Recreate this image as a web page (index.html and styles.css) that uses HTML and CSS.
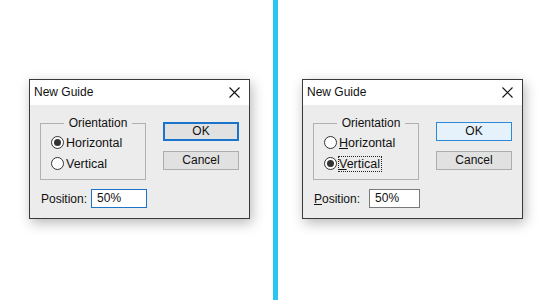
FILE: index.html
```html
<!DOCTYPE html>
<html>
<head>
    <link rel="stylesheet" href="styles.css">
</head>
<body>
    <div class="ng-page">
        <div class="ng-panel ng-panel-left">
            <div class="ng-dialog">
                <div class="ng-titlebar">
                    <span class="ng-title">New Guide</span>
                    <svg class="ng-close" width="11" height="11" viewBox="0 0 11 11">
                        <path d="M0.5 0.5 L10.5 10.5 M10.5 0.5 L0.5 10.5" stroke="#111" stroke-width="1.1" fill="none"/>
                    </svg>
                </div>
                <div class="ng-body">
                    <div class="ng-top">
                        <fieldset class="ng-group">
                            <legend class="ng-legend">Orientation</legend>
                            <div class="ng-radio-row">
                                <span class="ng-radio ng-radio-on"></span>
                                <span class="ng-label">Horizontal</span>
                            </div>
                            <div class="ng-radio-row">
                                <span class="ng-radio"></span>
                                <span class="ng-label">Vertical</span>
                            </div>
                        </fieldset>
                        <div class="ng-buttons">
                            <div class="ng-btn ng-btn-default">OK</div>
                            <div class="ng-btn">Cancel</div>
                        </div>
                    </div>
                    <div class="ng-position">
                        <span class="ng-pos-label">Position:</span>
                        <div class="ng-input ng-input-focus">50%</div>
                    </div>
                </div>
            </div>
        </div>

        <div class="ng-divider"></div>

        <div class="ng-panel ng-panel-right">
            <div class="ng-dialog">
                <div class="ng-titlebar">
                    <span class="ng-title">New Guide</span>
                    <svg class="ng-close" width="11" height="11" viewBox="0 0 11 11">
                        <path d="M0.5 0.5 L10.5 10.5 M10.5 0.5 L0.5 10.5" stroke="#111" stroke-width="1.1" fill="none"/>
                    </svg>
                </div>
                <div class="ng-body">
                    <div class="ng-top">
                        <fieldset class="ng-group">
                            <legend class="ng-legend">Orientation</legend>
                            <div class="ng-radio-row">
                                <span class="ng-radio"></span>
                                <span class="ng-label"><u>H</u>orizontal</span>
                            </div>
                            <div class="ng-radio-row">
                                <span class="ng-radio ng-radio-on"></span>
                                <span class="ng-label ng-label-focus"><u>V</u>ertical</span>
                            </div>
                        </fieldset>
                        <div class="ng-buttons">
                            <div class="ng-btn ng-btn-hover">OK</div>
                            <div class="ng-btn">Cancel</div>
                        </div>
                    </div>
                    <div class="ng-position">
                        <span class="ng-pos-label"><u>P</u>osition:</span>
                        <div class="ng-input ng-input-plain">50%</div>
                    </div>
                </div>
            </div>
        </div>
    </div>
</body>
</html>
```

FILE: styles.css
```css
body {
    margin: 0;
    background: #fff;
    font-family: 'Liberation Sans', Arial, sans-serif;
    font-size: 12px;
    color: #111;
}

.ng-page {
    display: flex;
    height: 300px;
}

.ng-panel {
    display: flex;
    align-items: center;
    padding-bottom: 2px;
}

.ng-panel-left {
    width: 244px;
    padding-left: 29px;
}

.ng-panel-right {
    padding-left: 24px;
}

.ng-divider {
    width: 5px;
    background: #2cc4f0;
}

/* dialog window */
.ng-dialog {
    width: 219px;
    border: 1px solid #3a3a3a;
    background: #ececec;
    box-shadow: 2px 4px 12px rgba(0,0,0,0.28);
}

.ng-titlebar {
    height: 25px;
    background: #fff;
    display: flex;
    align-items: center;
    justify-content: space-between;
    padding: 0 9px 0 4px;
}

.ng-title {
    font-size: 12px;
    margin-top: -1px;
}

.ng-close {
    margin-top: -1px;
}

.ng-body {
    padding: 11px 10px 10px 10px;
}

.ng-top {
    display: flex;
    justify-content: space-between;
    align-items: flex-start;
}

/* orientation group */
.ng-group {
    box-sizing: border-box;
    width: 106px;
    height: 64px;
    margin: 0;
    padding: 2px 0 0 10px;
    border: 1px solid #b0b0b0;
}

.ng-legend {
    margin: 0 auto;
    padding: 0 5px;
    font-size: 12px;
    line-height: 14px;
}

.ng-radio-row {
    display: flex;
    align-items: center;
    height: 21px;
}

.ng-radio {
    width: 11px;
    height: 11px;
    border: 1px solid #333;
    border-radius: 50%;
    background: #fff;
    margin-right: 1px;
    display: flex;
    align-items: center;
    justify-content: center;
}

.ng-radio-on::after {
    content: '';
    width: 7px;
    height: 7px;
    border-radius: 50%;
    background: #333;
}

.ng-label {
    padding: 0 1px 0 0;
    border: 1px dotted transparent;
    line-height: 14px;
    font-size: 12.5px;
}

.ng-label-focus {
    border-color: #222;
}

/* buttons */
.ng-buttons {
    display: flex;
    flex-direction: column;
    gap: 10px;
    margin-top: 6px;
}

.ng-btn {
    width: 74px;
    height: 17px;
    line-height: 17px;
    text-align: center;
    background: #e1e1e1;
    border: 1px solid #adadad;
}

.ng-btn-default {
    width: 72px;
    height: 15px;
    line-height: 15px;
    border: 2px solid #1a74cc;
}

.ng-btn-hover {
    background: #e5f1fb;
    border-color: #2b8ad8;
}

/* position row */
.ng-position {
    display: flex;
    align-items: center;
    margin-top: 9px;
    padding-left: 1px;
}

.ng-pos-label {
    margin-right: 4px;
}

.ng-input {
    height: 17px;
    line-height: 17px;
    padding-left: 5px;
    background: #fff;
}

.ng-input-focus {
    width: 49px;
    border: 1px solid #1a74cc;
}

.ng-input-plain {
    width: 44px;
    margin-left: 5px;
    border: 1px solid #7a7a7a;
}
```
